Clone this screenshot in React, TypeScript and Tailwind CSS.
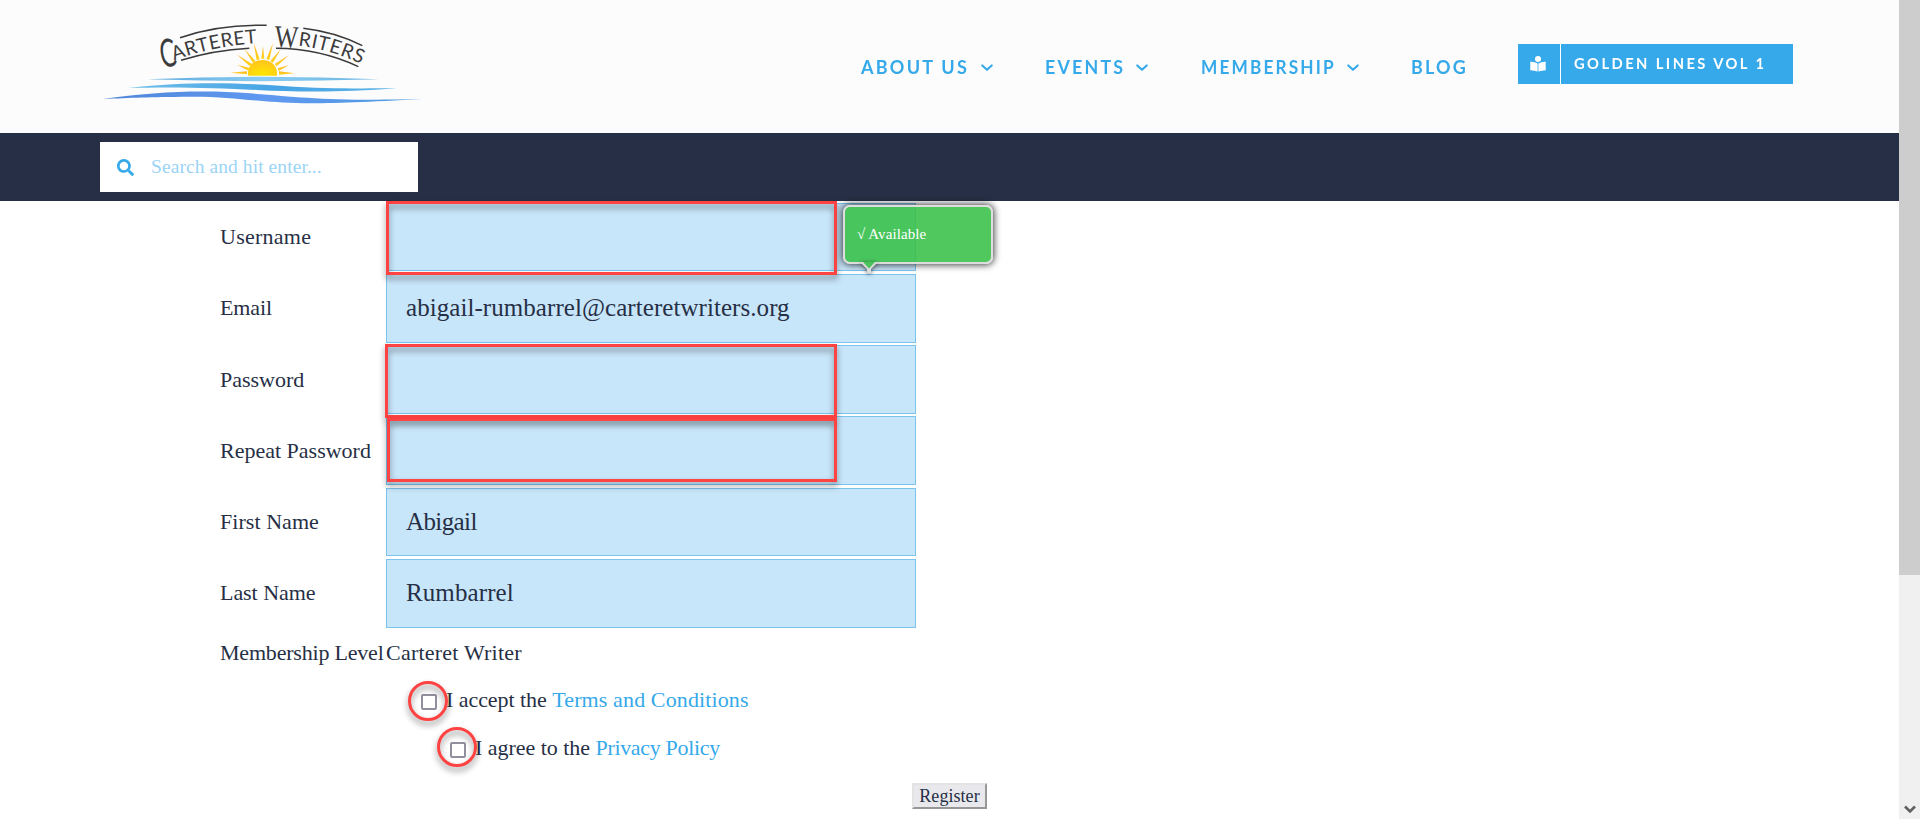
import React from 'react';
import { FaSearch } from 'react-icons/fa';

const serif = "font-['Georgia','Liberation_Serif',serif]";

function Chevron({ className }: { className: string }) {
  return (
    <svg viewBox="0 0 12 8" className={`h-2 w-3 ${className}`} fill="none" stroke="#35a9ea" strokeWidth="2.1" strokeLinecap="round" strokeLinejoin="round">
      <path d="M1.3 1.4 6 5.8l4.700-4.400" />
    </svg>
  );
}

function ReaderIcon() {
  return (
    <svg viewBox="0 0 16 16" className="size-4" fill="#fff">
      <circle cx="8" cy="3" r="3" />
      <path d="M.3 5.800Q4.500 5.600 7.600 7.400V15.600Q4.500 14.300 .3 14.200Z" />
      <path d="M15.700 5.800Q11.500 5.600 8.400 7.400V15.600Q11.500 14.300 15.700 14.200Z" />
    </svg>
  );
}

const rays = [
  'M421 188 471 184V193Z',
  'M441 164 478 174 475 182Z',
  'M440 133 486 162 480 169Z',
  'M464 118 497 154 489 159Z',
  'M491 98 509 148 500 151Z',
  'M519 109 523 146H514Z',
  'M549 99 538 150 529 147Z',
  'M572 118 549 158 541 153Z',
  'M597 135 560 169 554 162Z',
  'M597 165 566 183 563 175Z',
  'M614 190 567 194V184Z',
];

function Logo() {
  return (
    <svg viewBox="0 0 1050 330" className="h-[110px] w-[350px]">
      <defs>
        <path id="left" d="M252 152Q370 107 520 98" />
        <path id="right" d="M624 107Q712 116 820 164" />
        <radialGradient id="sun" cx="50%" cy="90%" r="80%">
          <stop offset="0" stopColor="#ffe600" />
          <stop offset="1" stopColor="#ffc61a" />
        </radialGradient>
        <linearGradient id="ray" x1="0" x2="0" y1="0" y2="1">
          <stop offset="0" stopColor="#ffb52b" />
          <stop offset="1" stopColor="#ffd416" />
        </linearGradient>
        <linearGradient id="sea1"><stop offset="0" stopColor="#5aa9dd" /><stop offset=".5" stopColor="#8bcdf2" /><stop offset="1" stopColor="#69b4e2" /></linearGradient>
        <linearGradient id="sea2"><stop offset="0" stopColor="#6fc0ea" /><stop offset=".55" stopColor="#46a3e4" /><stop offset="1" stopColor="#5cb4e6" /></linearGradient>
        <linearGradient id="sea3"><stop offset="0" stopColor="#4f86d8" /><stop offset=".5" stopColor="#5f98f0" /><stop offset="1" stopColor="#4f9be0" /></linearGradient>
      </defs>
      <g fill="none" stroke="#3a3a3a" strokeWidth="4.500">
        <path d="M270 83Q390 42 530 46" />
        <path d="M640 55Q735 66 817 107" />
        <path d="M273 151Q370 121 478 115" />
        <path d="M558 115Q690 116 805 170" />
      </g>
      <g fill="#3c3c3c" className="font-['Lato',sans-serif]">
        <text transform="translate(217 174) rotate(-10) scale(.74 1.22)" fontSize="96">C</text>
        <text fontSize="58" textLength="256" lengthAdjust="spacing"><textPath href="#left" textLength="256" lengthAdjust="spacing">ARTERET</textPath></text>
        <text transform="translate(552 110) rotate(3) scale(.8 1)" fontSize="94" className="font-['Liberation_Serif',serif]">W</text>
        <text fontSize="58" textLength="198" lengthAdjust="spacing"><textPath href="#right" textLength="198" lengthAdjust="spacing">RITERS</textPath></text>
      </g>
      <g fill="url(#ray)">{rays.map((d) => <path key={d} d={d} />)}</g>
      <path d="M474 197C471 168 492 150 518 150S564 168 561 197Z" fill="url(#sun)" />
      <path d="M172 208Q520 193 866 208Q520 219 172 208Z" fill="url(#sea1)" />
      <path d="M114 234C300 213 450 219 580 228S800 235 922 235C750 248 620 246 500 240S260 230 114 234Z" fill="url(#sea2)" />
      <path d="M38 267C190 246 330 239 480 250S720 274 1000 267C830 276 740 280 640 280C500 277 430 259 300 260S130 263 38 267Z" fill="url(#sea3)" />
    </svg>
  );
}

const nav = [
  { label: 'ABOUT US', box: 'w-[184px]', text: 'w-[107px] scale-x-[0.925]', arrow: 'ml-[13px]' },
  { label: 'EVENTS', box: 'w-[156px]', text: 'w-[80px] scale-x-[0.915]', arrow: 'ml-[11px]' },
  { label: 'MEMBERSHIP', box: 'w-[210px]', text: 'w-[134px] scale-x-[0.885]', arrow: 'ml-[12px]' },
  { label: 'BLOG', box: 'w-[107px]', text: 'w-[58px] scale-x-[0.92]', arrow: '' },
];

const mark = 'pointer-events-none absolute z-10 border-[3px] border-[#ff4343] drop-shadow-[0_4px_3px_rgba(0,0,0,0.45)]';

const fields = [
  { label: 'Username', value: '', space: 'tracking-[0.25px]', mark: '-top-[3px] -left-px h-[74px] w-[451px]', tip: true },
  { label: 'Email', value: 'abigail-rumbarrel@carteretwriters.org', space: 'tracking-[-0.1px]', text: 'tracking-[0.06px]', mark: '' },
  { label: 'Password', value: '', space: 'tracking-[0px]', mark: '-top-[2px] -left-[2px] h-[74px] w-[452px]' },
  { label: 'Repeat Password', value: '', space: 'tracking-[0px]', mark: 'top-[1px] left-0 h-[64px] w-[450px]' },
  { label: 'First Name', value: 'Abigail', space: 'tracking-[0.05px]', text: 'tracking-[-0.6px]', mark: '' },
  { label: 'Last Name', value: 'Rumbarrel', space: 'tracking-[-0.05px]', text: 'tracking-[0.1px]', mark: '' },
];

function Tooltip() {
  return (
    <div className="absolute top-[1px] left-[456px] z-20 h-[59px] w-[150px]">
      <div className="flex h-full items-center rounded-[7px] border-2 border-[#dddddd] bg-[#32be41]/85 pl-[12px] text-[15px] tracking-[0.08px] text-white shadow-[0_0_7px_1px_rgba(0,0,0,0.75)]">
        √ Available
      </div>
      <svg viewBox="0 0 18 12" className="absolute top-[57px] left-[17px] h-3 w-[18px] drop-shadow-[0_1px_2px_rgba(0,0,0,0.6)]">
        <path d="M0 0H18L11 7V11H7V7Z" fill="#ddd" />
        <path d="M3 0H15L9 6.500Z" fill="#49c45a" />
      </svg>
    </div>
  );
}

function Consent({ lead, link, indent }: { lead: string; link: string; indent: string }) {
  const first = link.startsWith('Terms');
  return (
    <div className={`flex h-12 items-center ${indent}`}>
      <div className="relative mt-[4px] mr-[9px] size-4 rounded-[2px] border-2 border-[#8f8f9d] bg-white">
        <span className={`${mark} size-10 rounded-full ${first ? '-top-[15px]' : '-top-[17px]'} -left-[15px]`} />
      </div>
      <span className={`whitespace-pre ${first ? 'tracking-[-0.05px]' : 'tracking-[-0.03px]'}`}>
        {lead} <a className={`text-[#35a9ea] ${first ? 'tracking-[0.12px]' : 'tracking-[-0.33px]'}`}>{link}</a>
      </span>
    </div>
  );
}

export default function App() {
  return (
    <div className="flex h-[819px] w-full overflow-hidden bg-white text-[#262f45]">
      <div className="min-w-0 flex-1">
        <header className="flex h-[133px] bg-[#fcfcfc] pt-[10px] pl-[90px]">
          <Logo />
          <nav className="ml-[421px] flex font-['Trebuchet_MS','Lato',sans-serif] font-bold text-[#35a9ea]">
            {nav.map((n) => (
              <div key={n.label} className={`flex h-[114px] items-center ${n.box}`}>
                <span className={`origin-left text-[19.5px] leading-6 tracking-[2.4px] whitespace-nowrap ${n.text}`}>{n.label}</span>
                {n.arrow && <Chevron className={`mt-[2px] ${n.arrow}`} />}
              </div>
            ))}
            <a className="mt-[34px] flex h-10 w-[275px] bg-[#35a9ea] text-white">
              <span className="flex w-[43px] items-center justify-center border-r border-white pr-[3px]">
                <ReaderIcon />
              </span>
              <span className="ml-[13px] origin-left scale-x-[0.95] text-[15.5px] leading-[39px] tracking-[2.55px] whitespace-nowrap">GOLDEN LINES VOL 1</span>
            </a>
          </nav>
        </header>
        <div className="h-[68px] bg-[#262f45] pt-[9px] pl-[100px]">
          <div className="flex h-[50px] w-[318px] items-center bg-white pl-[17px]">
            <FaSearch className="size-[17px] text-[#35a9ea]" />
            <span className={`pl-[17px] text-[19.5px] tracking-[0.08px] text-[#9bd4f5] ${serif}`}>Search and hit enter...</span>
          </div>
        </div>
        <main className={`pt-[1.75px] pl-[220px] text-[22px] leading-6 tracking-[-0.2px] ${serif}`}>
          {fields.map((f) => (
            <div key={f.label} className="flex h-[71.22px]">
              <label className={`flex h-[68.7px] w-[166px] shrink-0 items-center whitespace-nowrap ${f.space}`}>{f.label}</label>
              <div className={`relative flex h-[68.7px] w-[530px] items-center border border-[#7ac4ee] bg-[#c8e6fa] pl-[19px] text-[25px] ${f.text ?? ''}`}>
                {f.value}
                {f.mark && <span className={`${mark} ${f.mark}`} />}
                {f.tip && <Tooltip />}
              </div>
            </div>
          ))}
          <div className="flex h-[46px] items-center">
            <span className="w-[166px] whitespace-nowrap">Membership Level</span>
            <span className="tracking-[0.22px]">Carteret Writer</span>
          </div>
          <Consent lead="I accept the" link="Terms and Conditions" indent="pl-[201px]" />
          <Consent lead="I agree to the" link="Privacy Policy" indent="pl-[230px]" />
          <div className="flex pt-[11px] pl-[692px]">
            <button className="flex h-[26px] w-[75px] items-center justify-center border-2 border-t-[#e3e3e3] border-r-[#979797] border-b-[#979797] border-l-[#e3e3e3] bg-[#e9e9ed] text-[18px] leading-5 tracking-[0.05px]">
              Register
            </button>
          </div>
        </main>
      </div>
      <div className="flex w-[21px] flex-col items-center justify-between bg-[#f0f0f0]">
        <div className="h-[575px] w-full bg-[#cdcdcd]" />
        <svg viewBox="0 0 12 9" className="mb-[5px] h-[9px] w-3" fill="none" stroke="#606060" strokeWidth="2.600">
          <path d="M1 1.500 6 6.500l5-5" />
        </svg>
      </div>
    </div>
  );
}
